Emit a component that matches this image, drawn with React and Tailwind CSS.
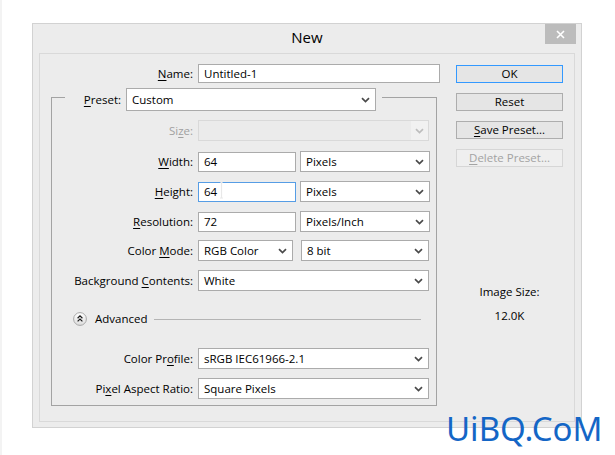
import React from "react";

const F = { fontFamily: '"Open Sans", "Noto Sans", sans-serif' };

function Chevron({ color = "#4a4a4a" }) {
  return (
    <svg width="9" height="6" viewBox="0 0 9 6" className="shrink-0">
      <path d="M1 1.2 L4.5 4.6 L8 1.2" fill="none" stroke={color} strokeWidth="1.7" />
    </svg>
  );
}

function Select({ w, h = "h-[21px]", text }) {
  return (
    <div className={`${w} ${h} border border-[#ababab] bg-white flex items-center pl-[5px] pr-[5px] shrink-0`}>
      <span className="flex-1 whitespace-nowrap">{text}</span>
      <Chevron />
    </div>
  );
}

function Input({ w, text, focus }) {
  return (
    <div
      className={`${w} h-[20px] border ${focus ? "border-[#569de5]" : "border-[#ababab]"} bg-white flex items-center pl-[5px] shrink-0 relative`}
    >
      <span className="whitespace-nowrap">{text}</span>
      {focus && (
        <svg width="5" height="17" viewBox="0 0 5 17" className="absolute left-[20px] top-[-1px]">
          <path d="M2.5 0 V16" stroke="#e8e8e8" strokeWidth="1.2" />
          <path d="M1 0 H4 M1 16 H4" stroke="#e8e8e8" strokeWidth="1" />
        </svg>
      )}
    </div>
  );
}

function Label({ children, w = "w-[141px]", gray }) {
  return (
    <div className={`${w} text-right whitespace-nowrap shrink-0 ${gray ? "text-[#a0a0a0]" : "text-black"}`}>{children}</div>
  );
}

function U({ children }) {
  return <span className="underline underline-offset-[1.5px]">{children}</span>;
}

function Row({ mt, children }) {
  return <div className={`${mt} h-[21px] flex items-center gap-[5px]`}>{children}</div>;
}

function Btn({ children, mt, ok, disabled }) {
  return (
    <div
      className={`${mt} h-[18px] flex items-center justify-center border ${
        ok ? "border-[#3399ff] bg-[#e5e5e5] text-black" : disabled ? "border-[#d6d6d6] bg-[#efefef] text-[#a3a3a3]" : "border-[#adadad] bg-[#e5e5e5] text-black"
      }`}
    >
      {children}
    </div>
  );
}

export default function App() {
  return (
    <div className="w-[615px] h-[455px] bg-white border-l-2 border-[#f3f3f3] relative overflow-hidden text-[11.5px] leading-none" style={F}>
      <div className="ml-[30px] mt-[23px] w-[550px] h-[405px] border border-[#d2d2d2] bg-[#ececec] flex flex-col px-[6px] pb-[5px]">
        <div className="h-[29px] grid grid-cols-[1fr_auto_1fr] shrink-0">
          <div />
          <div className="self-center text-[15px] text-black pb-[2px]">New</div>
          <div className="flex justify-end">
            <div className="w-[31px] h-[20px] bg-[#bcbcbc] flex items-center justify-center mr-[-1px]">
              <svg width="9" height="9" viewBox="0 0 9 9">
                <path d="M1 1 L8 8 M8 1 L1 8" stroke="#ffffff" strokeWidth="1.6" />
              </svg>
            </div>
          </div>
        </div>
        <div className="flex-1 border border-[#d9d9d9] flex">
          {/* left column */}
          <div className="w-[400px] flex flex-col">
            <div className="mt-[10px] h-[19px] flex items-center gap-[5px]">
              <Label w="w-[153px]">
                <U>N</U>ame:
              </Label>
              <div className="w-[242px] h-[19px] border border-[#ababab] bg-white flex items-center pl-[5px]">Untitled-1</div>
            </div>

            <div className="mt-[5px] ml-[11px] w-[386px] flex flex-col">
              <div className="h-[23px] flex">
                <div className="w-[14px] mt-[9px] border-l border-t border-[#a3a3a3]" />
                <div className="flex items-center">
                  <Label w="w-[56px]">
                    <U>P</U>reset:
                  </Label>
                  <div className="ml-[5px]">
                    <Select w="w-[250px]" h="h-[23px]" text="Custom" />
                  </div>
                </div>
                <div className="flex-1 ml-[6px] mt-[9px] border-t border-r border-[#a3a3a3]" />
              </div>
              <div className="border-x border-b border-[#a3a3a3] pb-[6px] flex flex-col">
                <Row mt="mt-[9px]">
                  <Label gray>
                    Si<U>z</U>e:
                  </Label>
                  <div className="w-[231px] h-[21px] border border-[#d9d9d9] bg-[#ebebeb] flex items-center justify-end">
                    <div className="w-[17px] h-full bg-[#f1f1f1] flex items-center justify-center">
                      <Chevron color="#bdbdbd" />
                    </div>
                  </div>
                </Row>
                <Row mt="mt-[10px]">
                  <Label>
                    <U>W</U>idth:
                  </Label>
                  <Input w="w-[98px]" text="64" />
                  <div className="ml-[-1px]">
                    <Select w="w-[130px]" text="Pixels" />
                  </div>
                </Row>
                <Row mt="mt-[9px]">
                  <Label>
                    <U>H</U>eight:
                  </Label>
                  <Input w="w-[98px]" text="64" focus />
                  <div className="ml-[-1px]">
                    <Select w="w-[130px]" text="Pixels" />
                  </div>
                </Row>
                <Row mt="mt-[9px]">
                  <Label>
                    <U>R</U>esolution:
                  </Label>
                  <Input w="w-[98px]" text="72" />
                  <div className="ml-[-1px]">
                    <Select w="w-[130px]" text="Pixels/Inch" />
                  </div>
                </Row>
                <Row mt="mt-[8px]">
                  <Label>
                    Color <U>M</U>ode:
                  </Label>
                  <Select w="w-[95px]" text="RGB Color" />
                  <div className="ml-[3px]">
                    <Select w="w-[128px]" text="8 bit" />
                  </div>
                </Row>
                <Row mt="mt-[9px]">
                  <Label>
                    Background <U>C</U>ontents:
                  </Label>
                  <Select w="w-[231px]" text="White" />
                </Row>

                <div className="mt-[21px] ml-[21px] h-[14px] flex items-center">
                  <svg width="14" height="14" viewBox="0 0 14 14" className="shrink-0">
                    <defs>
                      <linearGradient id="g" x1="0" y1="0" x2="0" y2="1">
                        <stop offset="0" stopColor="#ffffff" />
                        <stop offset="1" stopColor="#dcdcdc" />
                      </linearGradient>
                    </defs>
                    <circle cx="7" cy="7" r="6.4" fill="url(#g)" stroke="#a8a8a8" strokeWidth="1" />
                    <path d="M4.6 6.2 L7 3.9 L9.4 6.2 M4.6 9.4 L7 7.1 L9.4 9.4" fill="none" stroke="#1a1a1a" strokeWidth="1.2" />
                  </svg>
                  <span className="ml-[8px] whitespace-nowrap">Advanced</span>
                  <div className="flex-1 ml-[6px] mr-[15px] border-t border-[#b4b4b4]" />
                </div>

                <Row mt="mt-[22px]">
                  <Label>
                    Color Pr<U>o</U>file:
                  </Label>
                  <Select w="w-[231px]" text="sRGB IEC61966-2.1" />
                </Row>
                <Row mt="mt-[9px]">
                  <Label>
                    Pi<U>x</U>el Aspect Ratio:
                  </Label>
                  <Select w="w-[231px]" text="Square Pixels" />
                </Row>
              </div>
            </div>
          </div>

          {/* right column */}
          <div className="ml-[16px] w-[107px] flex flex-col">
            <Btn mt="mt-[11px]" ok>
              OK
            </Btn>
            <Btn mt="mt-[10px]">Reset</Btn>
            <Btn mt="mt-[10px]">
              <span>
                <U>S</U>ave Preset...
              </span>
            </Btn>
            <Btn mt="mt-[10px]" disabled>
              <span>
                <U>D</U>elete Preset...
              </span>
            </Btn>
            <div className="mt-[119px] text-center text-black">Image Size:</div>
            <div className="mt-[12px] text-center text-black">12.0K</div>
          </div>
        </div>
      </div>

      <div
        className="absolute left-[444px] top-[412px] text-[33px] leading-none text-[#1466c6] whitespace-nowrap"
        style={{ fontFamily: '"Noto Sans", sans-serif' }}
      >
        UiBQ.CoM
      </div>
    </div>
  );
}
